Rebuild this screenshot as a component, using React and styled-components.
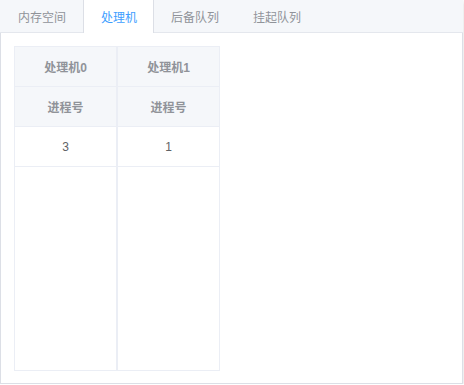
import React from 'react';
import styled, { createGlobalStyle } from 'styled-components';

const GlobalStyle = createGlobalStyle`
  html, body {
    margin: 0;
    padding: 0;
    background: #fff;
    font-family: "Liberation Sans", "Noto Sans CJK SC", sans-serif;
  }
`;

const Card = styled.div`
  box-sizing: border-box;
  width: 463px;
  height: 384px;
  background: #fff;
  border: 1px solid #dcdfe6;
  box-shadow: 0 2px 4px rgba(0, 0, 0, 0.12), 0 0 6px rgba(0, 0, 0, 0.04);
  display: flex;
  flex-direction: column;
`;

const TabBar = styled.div`
  display: flex;
  height: 33px;
  box-sizing: border-box;
  background: #f5f7fa;
  border-bottom: 1px solid #e4e7ed;
  margin: -1px -1px 0 -1px;
`;

const Tab = styled.div`
  box-sizing: border-box;
  height: ${(p) => (p.$active ? '33px' : '32px')};
  padding: 0 17px;
  margin-left: ${(p) => (p.$first ? '1px' : '0')};
  display: flex;
  align-items: center;
  font-size: 12px;
  color: ${(p) => (p.$active ? '#409eff' : '#909399')};
  background: ${(p) => (p.$active ? '#fff' : 'transparent')};
  border-left: ${(p) => (p.$active ? '1px solid #dcdfe6' : 'none')};
  border-right: ${(p) => (p.$active ? '1px solid #dcdfe6' : 'none')};
  padding-right: ${(p) => (p.$active ? '16px' : '17px')};
`;

const Body = styled.div`
  padding: 13px 13px;
  display: flex;
`;

const Table = styled.div`
  box-sizing: border-box;
  width: ${(p) => p.$width}px;
  height: 325px;
  border: 1px solid #ebeef5;
  display: flex;
  flex-direction: column;
  font-size: 12px;
`;

const Row = styled.div`
  box-sizing: border-box;
  height: 40px;
  flex-shrink: 0;
  display: flex;
  align-items: center;
  justify-content: center;
  border-bottom: 1px solid #ebeef5;
  background: ${(p) => (p.$head ? '#f5f7fa' : '#fff')};
  color: ${(p) => (p.$head ? '#909399' : '#606266')};
  font-weight: ${(p) => (p.$head ? 'bold' : 'normal')};
`;

const cpus = [
  { name: '处理机0', pid: 3, width: 103 },
  { name: '处理机1', pid: 1, width: 103 },
];

const tabs = ['内存空间', '处理机', '后备队列', '挂起队列'];

export default function App() {
  return (
    <>
      <GlobalStyle />
      <Card>
        <TabBar>
          {tabs.map((t, i) => (
            <Tab key={t} $active={i === 1} $first={i === 0}>
              {t}
            </Tab>
          ))}
        </TabBar>
        <Body>
          {cpus.map((c) => (
            <Table key={c.name} $width={c.width}>
              <Row $head>{c.name}</Row>
              <Row $head>进程号</Row>
              <Row>{c.pid}</Row>
            </Table>
          ))}
        </Body>
      </Card>
    </>
  );
}
